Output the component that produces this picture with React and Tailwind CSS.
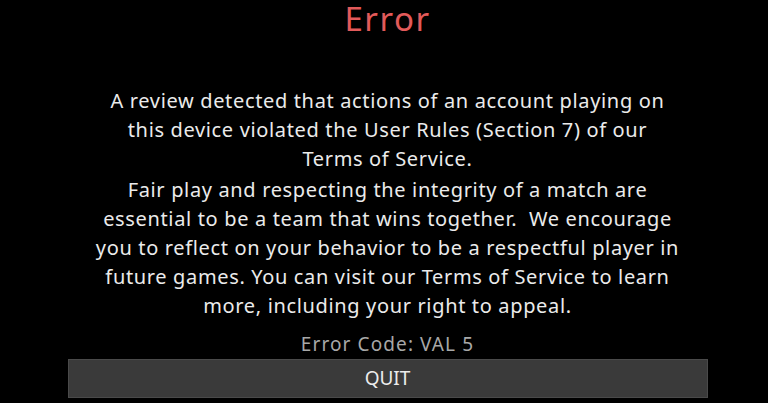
export default function App() {
  return (
    <div className="w-[768px] h-[403px] bg-black overflow-hidden flex flex-col items-center pl-[7px]" style={{ fontFamily: '"Noto Sans", "Open Sans", sans-serif' }}>
      <h1 className="text-[33px] leading-[38px] tracking-[1.5px] text-[#e25a5a]">Error</h1>
      <div className="mt-[48px] text-center text-[20px] leading-[29px] tracking-[0.65px] text-[#ebebeb]">
        <p>
          A review detected that actions of an account playing on<br />
          this device violated the User Rules (Section 7) of our<br />
          Terms of Service.
        </p>
        <p className="mt-[2px]">
          Fair play and respecting the integrity of a match are<br />
          essential to be a team that wins together.&nbsp; We encourage<br />
          you to reflect on your behavior to be a respectful player in<br />
          future games. You can visit our Terms of Service to learn<br />
          more, including your right to appeal.
        </p>
      </div>
      <div className="mt-[12px] text-[19px] leading-[24px] tracking-[1.1px] text-[#a8a8a8]">Error Code: VAL 5</div>
      <button className="mt-[3px] w-[640px] h-[39px] bg-[#3a3a3a] border border-[#4a4a4a] text-[#ececec] text-[19px]">
        QUIT
      </button>
    </div>
  );
}
